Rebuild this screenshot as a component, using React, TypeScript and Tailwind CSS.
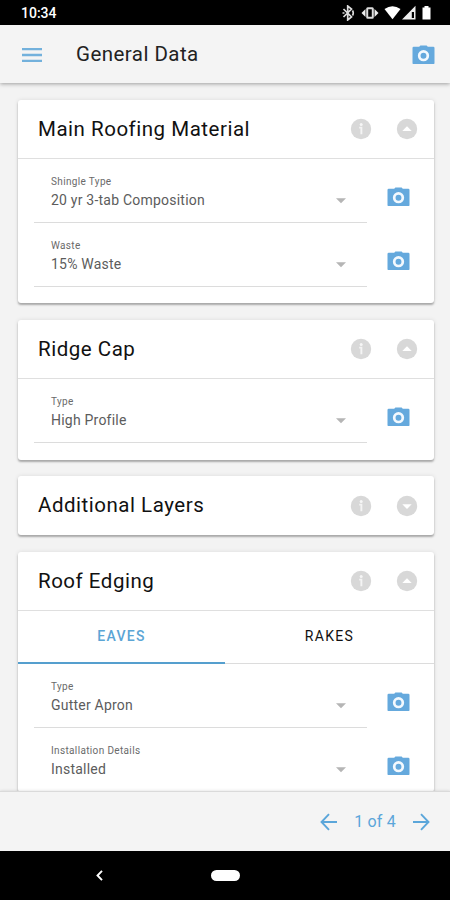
import React from "react";

const Camera = () => (
  <svg width="23" height="20" viewBox="0 0 23 20" className="block shrink-0">
    <path
      fill="#65a9dd"
      d="M7.200 1.700 8.400.5h6.200l1.200 1.200h5.500A1.200 1.200 0 0 1 22.500 2.900v15a1.200 1.200 0 0 1-1.200 1.200H1.700A1.200 1.200 0 0 1 .5 17.900v-15a1.200 1.200 0 0 1 1.200-1.200z"
    />
    <circle cx="11.500" cy="10.700" r="4.300" fill="none" stroke="#f3f9fe" strokeWidth="2.700" />
  </svg>
);

const Info = () => (
  <svg width="22" height="22" viewBox="0 0 22 22" className="block">
    <circle cx="11" cy="11" r="10.200" fill="#d8d8d8" />
    <circle cx="11.200" cy="6.600" r="1.500" fill="#f6f6f6" />
    <path d="M9.200 9.600h2.200v6.600" fill="none" stroke="#f4f4f4" strokeWidth="1.900" />
  </svg>
);

const Toggle = ({ open }: { open: boolean }) => (
  <svg width="22" height="22" viewBox="0 0 22 22" className="block">
    <circle cx="11" cy="11" r="10.200" fill="#d8d8d8" />
    <path d={open ? "M6.300 12.900 11 8.200l4.700 4.700z" : "M6.300 9.200h9.400L11 13.900z"} fill="#fff" />
  </svg>
);

const Field = ({ label, value }: { label: string; value: string }) => (
  <div className="flex h-16 pl-4">
    <div className="flex h-16 w-[333px] border-b border-[#dcdcdc] pl-[17px]">
      <div className="flex-1 pt-4">
        <div className="text-[10px] leading-[13px] tracking-[0.350px] text-[#6a6a6a]">{label}</div>
        <div className="mt-[3px] text-[14px] leading-[18px] tracking-[0.220px] text-[#5c5c5c]">{value}</div>
      </div>
      <svg width="10" height="6" viewBox="0 0 10 6" className="mt-[39px] mr-[21px] block">
        <path d="M0 .3h10L5 5.300z" fill="#b5b5b5" />
      </svg>
    </div>
    <div className="pt-[28px] pl-5">
      <Camera />
    </div>
  </div>
);

const CardHeader = ({ title, open = true }: { title: string; open?: boolean }) => (
  <div className={open ? "flex h-[59px] items-center border-b border-[#dfdfdf] pl-5 pr-4" : "flex h-[59px] items-center pl-5 pr-4"}>
    <h2 className="flex-1 pb-px text-[20.5px] font-normal leading-6 tracking-[0.520px] text-[#111]">{title}</h2>
    <div className="flex gap-6">
      <Info />
      <Toggle open={open} />
    </div>
  </div>
);

const card = "shrink-0 rounded-[3px] bg-white shadow-[0_2px_2px_rgba(0,0,0,0.28),0_0_4px_rgba(0,0,0,0.1)]";

export default function App() {
  return (
    <div className="flex h-[900px] w-[450px] flex-col overflow-hidden bg-[#f3f3f3] font-['Roboto','Liberation_Sans',sans-serif]">
      <div className="flex h-[25px] shrink-0 items-center justify-between bg-black pr-[18px] pl-[21px] text-white">
        <span className="text-[14px] font-medium leading-5">10:34</span>
        <svg width="92" height="16" viewBox="340 5 92 16" className="block" fill="#eee">
          <path d="m343.500 9 8 8-3.800 3V6l3.800 3-8 8M342.500 13h2M352.500 10.500q1.500 2.500 0 5" fill="none" stroke="#ddd" strokeWidth="1.700" />
          <rect x="367.200" y="8.200" width="5.600" height="9.600" rx=".5" fill="none" stroke="#ddd" strokeWidth="2" />
          <path d="m365.500 9-4 4 4 4zM374.500 9l4 4-4 4z" />
          <path fill="#fff" d="M384.500 9q8-5.500 16 0l-8 10.200z" />
          <path fillRule="evenodd" d="M415.500 5.800v13.700H402zM411.800 12v6h2.200v-6z" />
          <path fill="#fff" d="M424.500 6h4v1.500h2v12h-8v-12h2z" />
        </svg>
      </div>
      <header className="z-10 flex h-[58px] shrink-0 items-center bg-[#f4f4f4] pr-[15px] pl-[22px] shadow-[0_1px_4px_rgba(0,0,0,0.35)]">
        <svg width="20" height="14" viewBox="0 0 20 14" className="mt-px block">
          <path d="M0 1.200h20M0 7h20M0 12.800h20" stroke="#73b1dc" strokeWidth="2.300" />
        </svg>
        <h1 className="ml-[34px] flex-1 text-[20.5px] font-normal leading-6 tracking-[0.450px] text-[#222]">General Data</h1>
        <div className="pt-[2px]">
          <Camera />
        </div>
      </header>
      <main className="flex min-h-0 flex-1 flex-col overflow-hidden pt-[17px] pr-4 pl-[18px]">
        <section className={card}>
          <CardHeader title="Main Roofing Material" />
          <Field label="Shingle Type" value="20 yr 3-tab Composition" />
          <Field label="Waste" value="15% Waste" />
          <div className="h-4" />
        </section>
        <section className={`${card} mt-[17px]`}>
          <CardHeader title="Ridge Cap" />
          <Field label="Type" value="High Profile" />
          <div className="h-[17px]" />
        </section>
        <section className={`${card} mt-4`}>
          <CardHeader title="Additional Layers" open={false} />
        </section>
        <section className={`${card} mt-[17px]`}>
          <CardHeader title="Roof Edging" />
          <div className="flex h-[53px] text-[14px] tracking-[1.300px]">
            <div className="flex w-[207px] items-center justify-center border-b-2 border-[#559fce] font-medium text-[#5ba5d5]">EAVES</div>
            <div className="flex flex-1 items-center justify-center border-b border-[#dcdcdc] pb-px text-[#111]">RAKES</div>
          </div>
          <Field label="Type" value="Gutter Apron" />
          <Field label="Installation Details" value="Installed" />
        </section>
      </main>
      <footer className="z-10 flex h-[60px] shrink-0 items-center justify-end border-t border-[#dadada] bg-[#f4f4f4] pr-5 text-[#5ba6da] shadow-[0_0_3px_rgba(0,0,0,0.15)]">
        <svg width="18" height="18" viewBox="0 0 18 18" className="block" fill="none" stroke="currentColor" strokeWidth="1.900">
          <path d="M17 9H2M9 1.200 1.500 9 9 16.800" />
        </svg>
        <span className="mr-4 ml-4 text-[16px] leading-5 tracking-[0.200px]">1 of 4</span>
        <svg width="18" height="18" viewBox="0 0 18 18" className="block" fill="none" stroke="currentColor" strokeWidth="1.900">
          <path d="M1 9h15M9 1.200 16.500 9 9 16.800" />
        </svg>
      </footer>
      <nav className="z-10 flex h-[49px] shrink-0 items-center bg-black pl-24">
        <svg width="7" height="11" viewBox="0 0 7 11" className="block" fill="none" stroke="#fff" strokeWidth="1.900">
          <path d="M6 .8 1.500 5.500 6 10.200" />
        </svg>
        <div className="ml-[108px] h-[11px] w-[29px] rounded-full bg-white" />
      </nav>
    </div>
  );
}
